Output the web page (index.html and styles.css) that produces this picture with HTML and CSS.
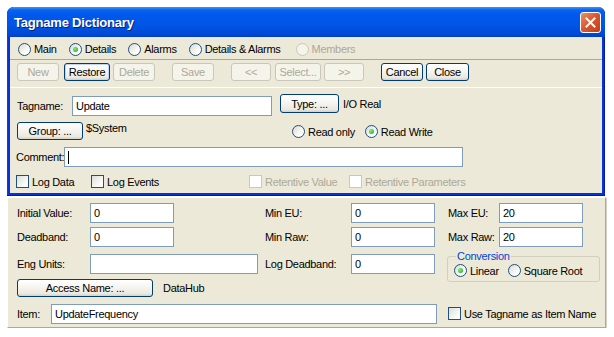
FILE: index.html
```html
<!DOCTYPE html>
<html lang="en">
<head>
  <meta charset="UTF-8" />
  <title>Tagname Dictionary</title>
  <link rel="stylesheet" href="styles.css">
</head>
<body>
  <div class="window">
    <div class="titlebar">
      <span class="title">Tagname Dictionary</span>
      <span class="close-btn">
        <svg width="13" height="13" viewBox="0 0 13 13"><path d="M2.5 2.5L10.5 10.5M10.5 2.5L2.5 10.5" stroke="#fff" stroke-width="2" stroke-linecap="square"/></svg>
      </span>
    </div>
    <div class="win-body">
      <div class="modes">
        <span class="radio"><span class="dot"></span>Main</span>
        <span class="radio checked"><span class="dot"></span>Details</span>
        <span class="radio"><span class="dot"></span>Alarms</span>
        <span class="radio"><span class="dot"></span>Details &amp; Alarms</span>
        <span class="radio disabled members"><span class="dot"></span>Members</span>
      </div>

      <div class="toolbar">
        <button class="btn w42" disabled>New</button>
        <button class="btn w46 restore">Restore</button>
        <button class="btn w42" disabled>Delete</button>
        <button class="btn w42 sep" disabled>Save</button>
        <button class="btn w40 sep" disabled>&lt;&lt;</button>
        <button class="btn w46 select" disabled>Select...</button>
        <button class="btn w40" disabled>&gt;&gt;</button>
        <button class="btn w42 sep">Cancel</button>
        <button class="btn w43">Close</button>
      </div>

      <div class="details">
        <div class="row tag-row">
          <span class="lbl tag-lbl">Tagname:</span>
          <div class="field tag-field">Update</div>
          <button class="btn type-btn">Type: ...</button>
          <span class="type-val">I/O Real</span>
        </div>
        <div class="row group-row">
          <button class="btn group-btn">Group: ...</button>
          <span class="group-val">$System</span>
          <span class="radio"><span class="dot"></span>Read only</span>
          <span class="radio checked rw"><span class="dot"></span>Read Write</span>
        </div>
        <div class="row comment-row">
          <span class="lbl comment-lbl">Comment:</span>
          <div class="field comment-field"><span class="caret"></span></div>
        </div>
        <div class="row check-row">
          <span class="opt w75"><span class="box"></span>Log Data</span>
          <span class="opt w158"><span class="box"></span>Log Events</span>
          <span class="opt w100 disabled"><span class="box"></span>Retentive Value</span>
          <span class="opt disabled"><span class="box"></span>Retentive Parameters</span>
        </div>
      </div>
    </div>
  </div>

  <div class="panel">
    <div class="grid">
      <span class="lbl">Initial Value:</span><div class="field">0</div>
      <span class="lbl c4">Min EU:</span><div class="field">0</div>
      <span class="lbl c7">Max EU:</span><div class="field">20</div>

      <span class="lbl">Deadband:</span><div class="field">0</div>
      <span class="lbl c4">Min Raw:</span><div class="field">0</div>
      <span class="lbl c7">Max Raw:</span><div class="field">20</div>

      <span class="lbl">Eng Units:</span><div class="field wide"></div>
      <span class="lbl c4">Log Deadband:</span><div class="field">0</div>

      <fieldset class="conversion">
        <legend>Conversion</legend>
        <div class="conv-opts">
          <span class="radio checked"><span class="dot"></span>Linear</span>
          <span class="radio"><span class="dot"></span>Square Root</span>
        </div>
      </fieldset>

      <div class="access">
        <button class="btn access-btn">Access Name: ...</button>
        <span>DataHub</span>
      </div>
    </div>

    <div class="row item-row">
      <span class="lbl item-lbl">Item:</span>
      <div class="field item-field">UpdateFrequency</div>
      <span class="opt use-tag"><span class="box"></span>Use Tagname as Item Name</span>
    </div>
  </div>
</body>
</html>
```

FILE: styles.css
```css
* {
  box-sizing: border-box;
}
body {
  margin: 0;
  background: #fff;
  font-family: "Liberation Sans", Arial, sans-serif;
  font-size: 11px;
  letter-spacing: -0.3px;
  color: #000;
}

/* window frame */
.window {
  width: 598px;
  margin: 7px 0 0 7px;
  padding: 0 3px 3px;
  background: #0831d9;
  border-radius: 7px 7px 0 0;
  box-shadow: inset -1px -1px 0 #001ea0, inset 1px 0 0 #0a3fe0;
}
.titlebar {
  height: 30px;
  margin: 0 -3px;
  padding: 0 4px 0 7px;
  display: flex;
  align-items: center;
  justify-content: space-between;
  border-radius: 7px 7px 0 0;
  background: linear-gradient(#3d95ff 0, #0a62ec 3px, #0058ee 8px, #0055e5 60%, #0049d6 90%, #003fc4 100%);
}
.title {
  color: #fff;
  font-weight: bold;
  font-size: 13px;
  letter-spacing: -0.2px;
  text-shadow: 1px 1px 0 #0a1e80;
  margin-top: 1px;
}
.close-btn {
  width: 21px;
  height: 21px;
  display: flex;
  align-items: center;
  justify-content: center;
  border: 1px solid #fff;
  border-radius: 3px;
  background: linear-gradient(135deg, #ec8e6d, #d8552e 50%, #c23d14);
  margin-top: 1px;
}
.win-body {
  background: #ece9d8;
}

/* mode radios */
.modes {
  height: 23px;
  padding: 2px 0 0 8px;
  display: flex;
  align-items: center;
  gap: 12px;
  border-bottom: 1px solid #aca899;
}
.modes .members {
  margin-left: 3px;
}
.radio {
  display: inline-flex;
  align-items: center;
  gap: 3px;
  white-space: nowrap;
}
.dot {
  width: 13px;
  height: 13px;
  border-radius: 50%;
  border: 1px solid #1c5180;
  background: linear-gradient(135deg, #dcd9cd, #fff 75%);
  display: inline-flex;
  align-items: center;
  justify-content: center;
  flex-shrink: 0;
}
.checked .dot::after {
  content: "";
  width: 5px;
  height: 5px;
  border-radius: 50%;
  background: radial-gradient(circle at 35% 35%, #7ef07a, #21a121);
}
.radio.disabled {
  color: #aca899;
}
.radio.disabled .dot {
  border-color: #cac8bb;
  background: #f5f4ea;
}

/* toolbar */
.toolbar {
  height: 28px;
  padding: 3px 0 0 7px;
  display: flex;
  align-items: flex-start;
  gap: 3px;
  border-bottom: 1px solid #fff;
}
.btn {
  height: 18px;
  padding: 0;
  font: inherit;
  letter-spacing: -0.3px;
  color: #000;
  border: 1px solid #003c74;
  border-radius: 3px;
  background: linear-gradient(#fff, #f4f3ee 50%, #ebe8de 85%, #d6d0c5);
}
.btn:disabled {
  color: #aca899;
  border-color: #c9c7ba;
  background: #f5f4ea;
}
.w40 { width: 40px; }
.w42 { width: 42px; }
.w43 { width: 43px; }
.w46 { width: 46px; }
.restore { margin-left: 2px; box-shadow: inset 0 0 0 1px #c1d3fb; }
.select { margin-left: 1px; }
.sep { margin-left: 14px; }

/* details area */
.details {
  padding: 6px 0 5px 7px;
}
.row {
  display: flex;
  align-items: flex-start;
}
.lbl {
  line-height: 20px;
  white-space: nowrap;
}
.field {
  height: 20px;
  width: 84px;
  padding: 0 3px;
  line-height: 18px;
  background: #fff;
  border: 1px solid #7f9db9;
  white-space: nowrap;
}
.tag-row {
  height: 22px;
}
.tag-lbl {
  width: 55px;
  margin-top: 2px;
}
.tag-field {
  width: 200px;
  margin-top: 2px;
}
.type-btn {
  width: 59px;
  height: 19px;
  margin-left: 8px;
}
.type-val {
  margin-left: 4px;
  line-height: 20px;
}
.group-row {
  height: 19px;
  margin-top: 6px;
  align-items: center;
}
.group-btn {
  width: 66px;
  height: 18px;
  align-self: flex-start;
}
.group-val {
  width: 209px;
  padding-left: 3px;
  align-self: flex-start;
  line-height: 13px;
}
.rw {
  margin-left: 10px;
}
.comment-row {
  margin-top: 6px;
  margin-left: -1px;
}
.comment-lbl {
  width: 48px;
}
.comment-field {
  width: 399px;
  display: flex;
  align-items: center;
}
.caret {
  width: 1px;
  height: 13px;
  background: #000;
}
.check-row {
  margin-top: 8px;
  height: 13px;
  align-items: center;
  margin-left: -1px;
}
.opt {
  display: inline-flex;
  align-items: center;
  gap: 3px;
  white-space: nowrap;
}
.box {
  width: 13px;
  height: 13px;
  border: 1px solid #1c5180;
  background: linear-gradient(135deg, #dcdcd7, #fff 80%);
  flex-shrink: 0;
}
.opt.disabled {
  color: #aca899;
}
.opt.disabled .box {
  border-color: #cac8bb;
  background: #fff;
}
.w75 { width: 75px; }
.w158 { width: 158px; }
.w100 { width: 100px; }

/* lower panel */
.panel {
  width: 599px;
  margin: 1px 0 0 7px;
  padding: 5px 0 3px 9px;
  background: #ece9d8;
  border: 1px solid;
  border-color: #fff #aca899 #aca899 #fff;
  box-shadow: 1px 1px 0 #d4d0c8;
}
.grid {
  display: grid;
  grid-template-columns: 73px 84px 91px 86px 84px 13px 51px 84px;
  grid-template-rows: 24px 27px 25px 25px;
  align-items: start;
}
.c4 { grid-column: 4; }
.c7 { grid-column: 7; }
.wide {
  grid-column: 2 / span 2;
  width: 168px;
}
.conversion {
  grid-column: 7 / span 2;
  grid-row: 3 / span 2;
  width: 153px;
  margin: -4px 0 0 -1px;
  padding: 0 0 4px 5px;
  border: 1px solid #d0d0bf;
  border-radius: 3px;
}
.conversion legend {
  margin-left: 3px;
  padding: 0 1px;
  line-height: 12px;
  color: #0046d5;
}
.conv-opts {
  display: flex;
  gap: 9px;
  margin-top: 2px;
  padding-left: 1px;
}
.access {
  grid-column: 1 / span 5;
  grid-row: 4;
  display: flex;
  align-items: center;
  gap: 10px;
}
.access-btn {
  width: 136px;
}
.item-row {
  height: 20px;
}
.item-lbl {
  width: 34px;
}
.item-field {
  width: 386px;
}
.use-tag {
  margin: 3px 0 0 11px;
}
```
